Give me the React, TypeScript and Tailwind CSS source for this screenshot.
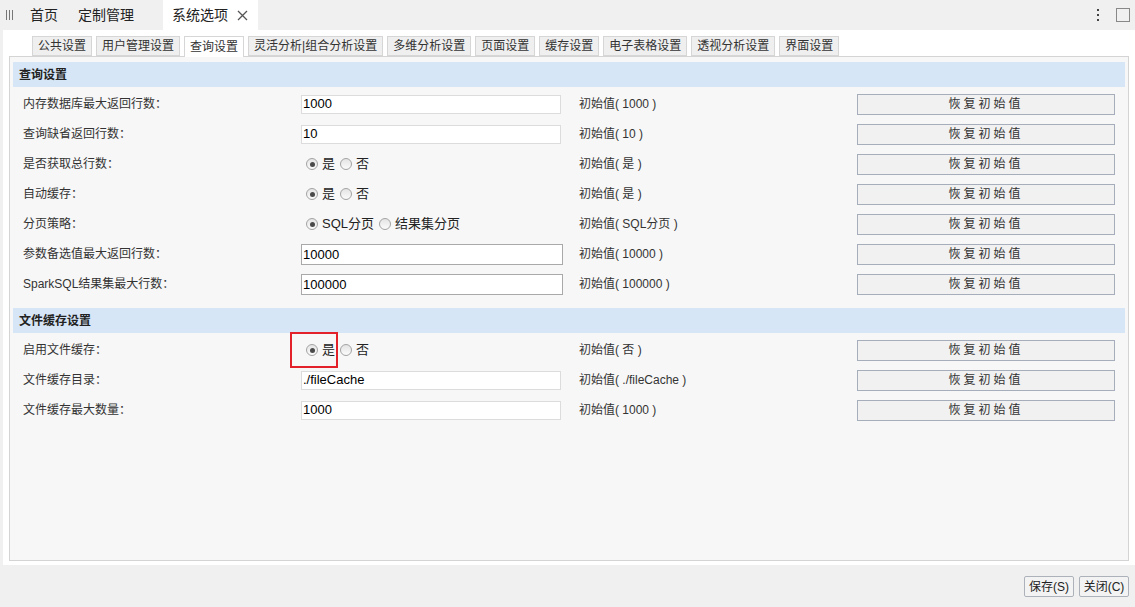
import React from 'react';

const FONT = { fontFamily: '"Liberation Sans", "Noto Sans CJK SC", sans-serif' };

const subTabs = ['公共设置', '用户管理设置', '查询设置', '灵活分析|组合分析设置', '多维分析设置', '页面设置', '缓存设置', '电子表格设置', '透视分析设置', '界面设置'];

type Row =
  | { label: string; kind: 'input'; value: string; dark?: boolean; init: string }
  | { label: string; kind: 'radio'; options: string[]; init: string; mark?: boolean };

const querySettings: Row[] = [
  { label: '内存数据库最大返回行数：', kind: 'input', value: '1000', init: '初始值( 1000 )' },
  { label: '查询缺省返回行数：', kind: 'input', value: '10', init: '初始值( 10 )' },
  { label: '是否获取总行数：', kind: 'radio', options: ['是', '否'], init: '初始值( 是 )' },
  { label: '自动缓存：', kind: 'radio', options: ['是', '否'], init: '初始值( 是 )' },
  { label: '分页策略：', kind: 'radio', options: ['SQL分页', '结果集分页'], init: '初始值( SQL分页 )' },
  { label: '参数备选值最大返回行数：', kind: 'input', value: '10000', dark: true, init: '初始值( 10000 )' },
  { label: 'SparkSQL结果集最大行数：', kind: 'input', value: '100000', dark: true, init: '初始值( 100000 )' },
];

const fileCacheSettings: Row[] = [
  { label: '启用文件缓存：', kind: 'radio', options: ['是', '否'], init: '初始值( 否 )', mark: true },
  { label: '文件缓存目录：', kind: 'input', value: './fileCache', init: '初始值( ./fileCache )' },
  { label: '文件缓存最大数量：', kind: 'input', value: '1000', init: '初始值( 1000 )' },
];

function Radio({ checked }: { checked: boolean }) {
  return (
    <span className="relative inline-flex h-[12px] w-[12px] items-center justify-center rounded-full border border-[#a3a3a3] bg-gradient-to-b from-[#e4e4e4] to-[#fbfbfb]">
      {checked && <span className="h-[5px] w-[5px] rounded-full bg-[#4a4a4a]" />}
    </span>
  );
}

function SettingRow({ row }: { row: Row }) {
  return (
    <div className="grid h-[30px] grid-cols-4 items-center text-[12px] text-[#333]">
      <div className="px-[10px]">{row.label}</div>
      <div className="relative px-[10px]">
        {row.kind === 'input' ? (
          <input
            readOnly
            value={row.value}
            className={
              row.dark
                ? 'h-[21px] w-[262px] border border-[#a9a9a9] bg-white px-[1px] text-[13px] text-black outline-none'
                : 'h-[19px] w-[260px] border border-[#dcdcdc] bg-white px-[1px] text-[13px] text-black outline-none'
            }
          />
        ) : (
          <div className="flex items-center pl-[5px] text-[13px]">
            {row.options.map((o, i) => (
              <span key={o} className="mr-[5px] flex items-center">
                <Radio checked={i === 0} />
                <span className="ml-[4px] text-[#222]">{o}</span>
              </span>
            ))}
            {row.mark && (
              <span className="absolute left-[-1px] top-[-8px] h-[36px] w-[48px] border-2 border-[#e3212b]" />
            )}
          </div>
        )}
      </div>
      <div className="px-[10px] text-[12px]">{row.init}</div>
      <div className="px-[10px]">
        <button className="h-[21px] w-[258px] border border-[#a7aebb] bg-[#f1f1f1] text-[12px] tracking-[3px] text-[#333]">
          恢复初始值
        </button>
      </div>
    </div>
  );
}

function Section({ title, rows }: { title: string; rows: Row[] }) {
  return (
    <div>
      <div className="flex h-[25px] items-center bg-[#d6e6f6] px-[6px] text-[12px] font-bold text-[#222]">{title}</div>
      <div className="pt-[2px]">
        {rows.map((r) => (
          <SettingRow key={r.label} row={r} />
        ))}
      </div>
    </div>
  );
}

export default function App() {
  return (
    <div className="flex h-[607px] w-[1135px] flex-col overflow-hidden bg-[#f0f0f0]" style={FONT}>
      {/* top tab strip */}
      <div className="flex h-[30px] shrink-0 items-center text-[14px] text-[#222]">
        <div className="ml-[6px] flex h-[10px] gap-[2px]">
          <span className="w-[1px] bg-[#777]" />
          <span className="w-[1px] bg-[#777]" />
          <span className="w-[1px] bg-[#777]" />
        </div>
        <span className="ml-[17px]">首页</span>
        <span className="ml-[20px]">定制管理</span>
        <div className="ml-[29px] flex h-full items-center bg-white pl-[9px] pr-[10px]">
          <span>系统选项</span>
          <svg width="11" height="11" viewBox="0 0 11 11" className="ml-[9px]">
            <path d="M1 1L10 10M10 1L1 10" stroke="#555" strokeWidth="1.3" />
          </svg>
        </div>
        <div className="ml-auto flex items-center">
          <div className="flex flex-col gap-[3px]">
            <span className="h-[2px] w-[2px] bg-[#444]" />
            <span className="h-[2px] w-[2px] bg-[#444]" />
            <span className="h-[2px] w-[2px] bg-[#444]" />
          </div>
          <span className="ml-[17px] mr-[5px] h-[14px] w-[14px] border border-[#888]" />
        </div>
      </div>

      {/* main white area */}
      <div className="ml-[3px] flex h-[535px] shrink-0 flex-col bg-white pl-[6px] pr-[6px] pb-[4px]">
        <div className="mt-[6px] flex gap-[4px] pl-[23px] text-[12px] text-[#333]">
          {subTabs.map((t) => (
            <div
              key={t}
              className={
                t === '查询设置'
                  ? 'relative z-10 mb-[-1px] flex h-[21px] items-center border border-b-0 border-[#d6d6d6] bg-white px-[5px]'
                  : 'flex h-[20px] items-center border border-[#d6d6d6] bg-[#efefef] px-[5px]'
              }
            >
              {t}
            </div>
          ))}
        </div>
        <div className="flex-1 border border-[#d4d4d4] bg-[#f7f7f7] px-[3px] pt-[5px]">
          <Section title="查询设置" rows={querySettings} />
          <div className="h-[9px]" />
          <Section title="文件缓存设置" rows={fileCacheSettings} />
        </div>
      </div>

      {/* footer */}
      <div className="flex flex-1 items-start justify-end gap-[5px] pr-[6px] pt-[11px]">
        <button className="h-[21px] w-[50px] rounded-[2px] border border-[#adb2ba] bg-[#f3f3f3] text-[12px] text-[#222]">保存(S)</button>
        <button className="h-[21px] w-[50px] rounded-[2px] border border-[#adb2ba] bg-[#f3f3f3] text-[12px] text-[#222]">关闭(C)</button>
      </div>
    </div>
  );
}
